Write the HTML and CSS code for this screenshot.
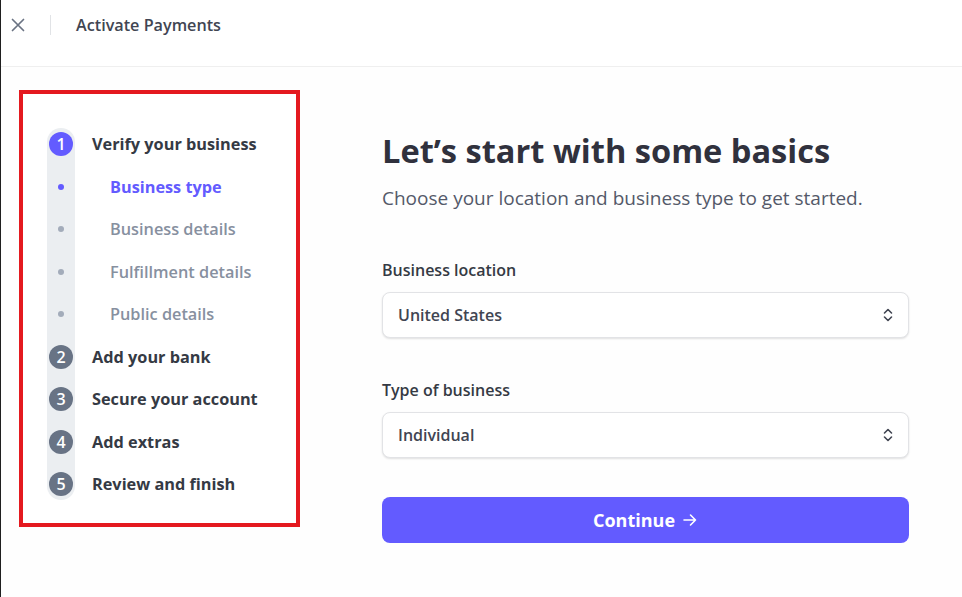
FILE: index.html
```html
<!DOCTYPE html>
<html lang="en">
<head>
<meta charset="utf-8">
<title>Activate Payments</title>
<link rel="stylesheet" href="styles.css">
</head>
<body>
<div class="app">
  <header class="topbar">
    <button class="close" aria-label="Close">
      <svg width="14" height="14" viewBox="0 0 14 14"><path d="M1.5 1.5 L12.5 12.5 M12.5 1.5 L1.5 12.5" stroke="#6a7383" stroke-width="1.7" stroke-linecap="round" fill="none"/></svg>
    </button>
    <span class="divider"></span>
    <span class="title">Activate Payments</span>
  </header>
  <div class="content">
    <aside class="sidebar">
      <div class="steps">
        <div class="track">
          <span class="num active">1</span>
          <span class="dotcell"><span class="dot active"></span></span>
          <span class="dotcell"><span class="dot"></span></span>
          <span class="dotcell"><span class="dot"></span></span>
          <span class="dotcell"><span class="dot"></span></span>
          <span class="num">2</span>
          <span class="num">3</span>
          <span class="num">4</span>
          <span class="num">5</span>
        </div>
        <div class="labels">
          <span class="step">Verify your business</span>
          <span class="sub current">Business type</span>
          <span class="sub">Business details</span>
          <span class="sub">Fulfillment details</span>
          <span class="sub">Public details</span>
          <span class="step">Add your bank</span>
          <span class="step">Secure your account</span>
          <span class="step">Add extras</span>
          <span class="step">Review and finish</span>
        </div>
      </div>
    </aside>
    <main class="main">
      <h1 class="heading">Let’s start with some basics</h1>
      <p class="lead">Choose your location and business type to get started.</p>
      <label class="field-label">Business location</label>
      <div class="select">
        <span>United States</span>
        <svg width="10" height="14" viewBox="0 0 10 14"><path d="M1.5 5 L5 1.5 L8.5 5 M1.5 9 L5 12.5 L8.5 9" stroke="#414552" stroke-width="1.6" fill="none" stroke-linecap="round" stroke-linejoin="round"/></svg>
      </div>
      <label class="field-label second">Type of business</label>
      <div class="select">
        <span>Individual</span>
        <svg width="10" height="14" viewBox="0 0 10 14"><path d="M1.5 5 L5 1.5 L8.5 5 M1.5 9 L5 12.5 L8.5 9" stroke="#414552" stroke-width="1.6" fill="none" stroke-linecap="round" stroke-linejoin="round"/></svg>
      </div>
      <button class="continue">Continue
        <svg width="16" height="14" viewBox="0 0 16 14"><path d="M2 7 H13.5 M8.5 2 L13.5 7 L8.5 12" stroke="#fff" stroke-width="1.6" fill="none" stroke-linecap="round" stroke-linejoin="round"/></svg>
      </button>
    </main>
  </div>
</div>
</body>
</html>
```
FILE: styles.css
```css
* { box-sizing: border-box; }
html, body { margin: 0; padding: 0; background: #fff; }
body {
  font-family: "Open Sans", "Noto Sans", sans-serif;
  color: #414552;
}
.app {
  min-height: 100vh;
  border-left: 1px solid #1f1f1f;
  background: #fefefe;
}
.topbar {
  height: 67px;
  display: flex;
  align-items: flex-start;
  padding-top: 15px;
  border-bottom: 1px solid #efefef;
  background: #fff;
}
.close {
  border: 0;
  background: none;
  padding: 0;
  margin-left: 9px;
  margin-top: 2px;
  width: 16px;
  height: 16px;
  display: flex;
  align-items: center;
  justify-content: center;
}
.divider {
  width: 1px;
  height: 20px;
  background: #e1e3e6;
  margin-left: 24px;
}
.title {
  margin-left: 25px;
  font-size: 16.2px;
  font-weight: 600;
  line-height: 20px;
  color: #414552;
}
.content {
  display: flex;
  align-items: flex-start;
}
.sidebar {
  margin-left: 18px;
  margin-top: 23px;
  width: 281px;
  height: 437px;
  border: 4px solid #e4191f;
  padding: 34px 0 0 24px;
  background: #fff;
}
.steps {
  display: flex;
  align-items: flex-start;
}
.track {
  width: 28px;
  background: #ebeef1;
  border-radius: 14px;
  padding: 4px 2px;
  display: flex;
  flex-direction: column;
  gap: 18.5px;
}
.num {
  width: 24px;
  height: 24px;
  border-radius: 50%;
  background: #687385;
  color: #fff;
  font-size: 16px;
  font-weight: 600;
  display: flex;
  align-items: center;
  justify-content: center;
}
.num.active { background: #635bff; }
.dotcell {
  width: 24px;
  height: 24px;
  display: flex;
  align-items: center;
  justify-content: center;
}
.dot {
  width: 6px;
  height: 6px;
  border-radius: 50%;
  background: #a3acba;
}
.dot.active { background: #635bff; }
.labels {
  margin-left: 17px;
  padding: 4px 0;
  display: flex;
  flex-direction: column;
  gap: 18.5px;
}
.labels span {
  height: 24px;
  line-height: 24px;
  font-size: 16.3px;
  white-space: nowrap;
}
.step { font-weight: 700; color: #353a44; }
.sub { padding-left: 18px; font-weight: 600; color: #87909f; }
.sub.current { color: #635bff; font-weight: 700; }
.main {
  margin-left: 82px;
  width: 527px;
  padding-top: 64px;
}
.heading {
  margin: 0;
  font-size: 32.6px;
  line-height: 40px;
  font-weight: 700;
  color: #30313d;
}
.lead {
  margin: 14px 0 0;
  font-size: 19px;
  line-height: 26px;
  color: #545969;
}
.field-label {
  display: block;
  margin-top: 48px;
  font-size: 16px;
  line-height: 22px;
  font-weight: 600;
  color: #353a44;
}
.field-label.second { margin-top: 41px; }
.select {
  margin-top: 11px;
  height: 46px;
  border: 1px solid #e2e3e6;
  border-radius: 8px;
  background: #fff;
  box-shadow: 0 1px 2px rgba(0,0,0,0.12);
  display: flex;
  align-items: center;
  justify-content: space-between;
  padding: 0 15px 0 15px;
  font-size: 16px;
  font-weight: 600;
  color: #414552;
}
.continue {
  margin-top: 39px;
  width: 100%;
  height: 46px;
  border: 0;
  border-radius: 8px;
  background: #635bff;
  color: #fff;
  font-family: inherit;
  font-size: 18px;
  font-weight: 700;
  display: flex;
  align-items: center;
  justify-content: center;
  gap: 7px;
}
```
